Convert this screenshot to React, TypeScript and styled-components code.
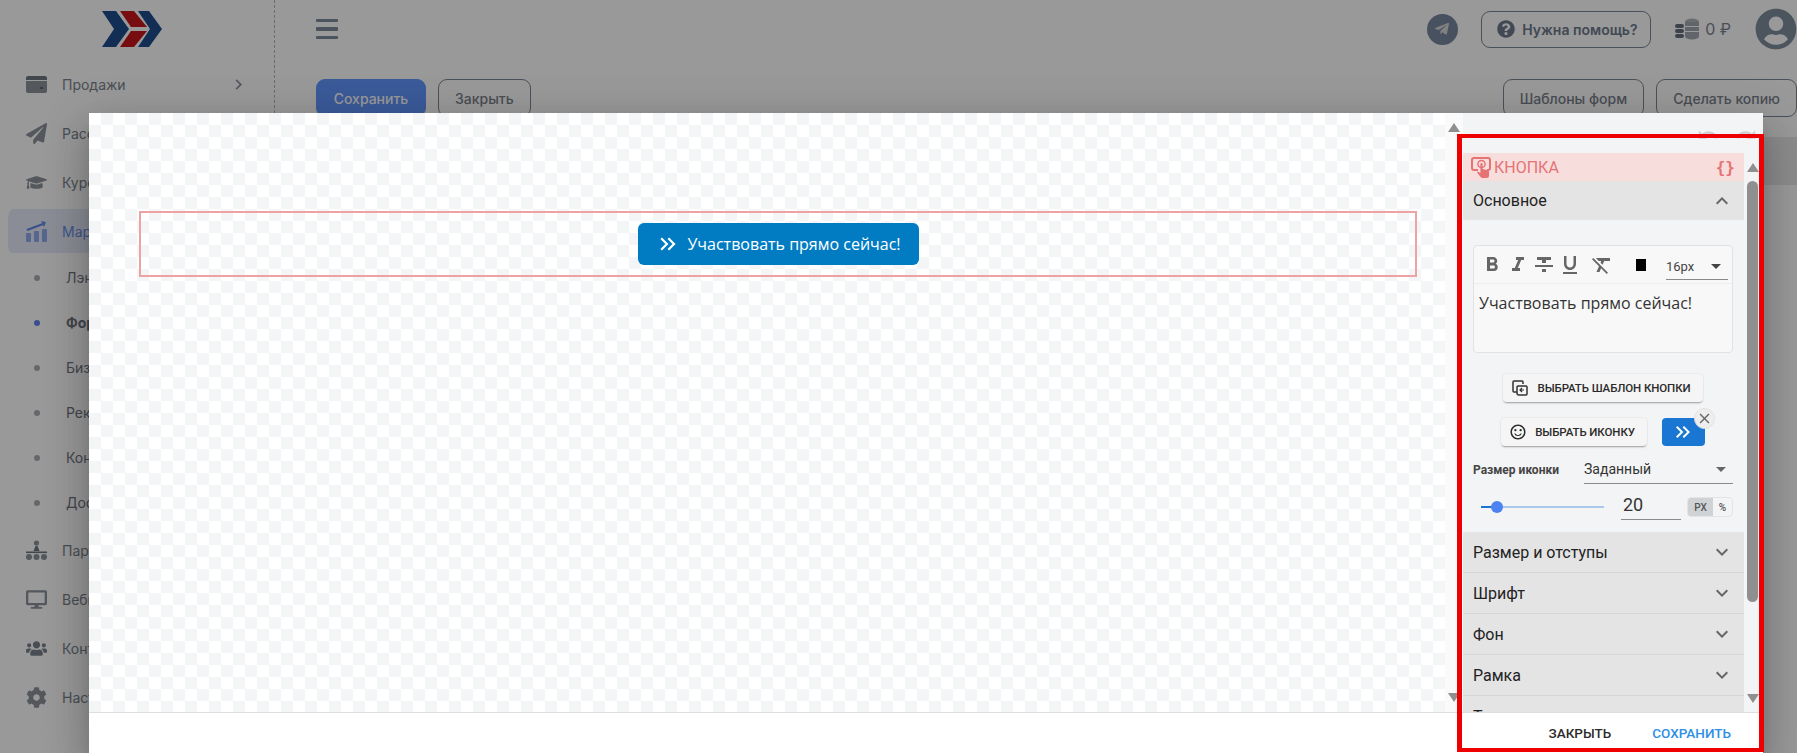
import { ReactNode } from 'react';
import styled, { createGlobalStyle } from 'styled-components';
import {
  FaPaperPlane, FaGraduationCap, FaDesktop, FaUsers, FaCog, FaTelegramPlane, FaQuestionCircle, FaUserCircle
} from 'react-icons/fa';
import {
  MdChevronRight, MdExpandMore, MdExpandLess, MdFormatBold, MdFormatItalic, MdFormatStrikethrough,
  MdFormatUnderlined, MdFormatClear, MdClose, MdKeyboardDoubleArrowRight, MdOutlineSentimentSatisfied,
  MdUndo, MdRedo, MdArrowDropDown
} from 'react-icons/md';

const GlobalStyle = createGlobalStyle`
  html, body {
    margin: 0;
    height: 100%;
    overflow: hidden;
    background: #fff;
    font-family: Inter, "Liberation Sans", sans-serif;
  }
  * { box-sizing: border-box; }
`;

const Screen = styled.div`
  position: relative;
  width: 1797px;
  height: 753px;
  overflow: hidden;
  display: flex;
`;

/* ---------- page behind the dialog ---------- */

const Sidebar = styled.aside`
  width: 275px;
  flex: none;
  padding-right: 8px;
  border-right: 1px dashed #b5b5b5;
`;

const LogoBox = styled.div`
  height: 60px;
  padding: 11px 0 0 102px;
  svg { display: block; }
`;

const NavRow = styled.div<{ $active?: boolean }>`
  height: 49px;
  margin-left: 8px;
  padding-left: 18px;
  display: flex;
  align-items: center;
  gap: 15px;
  font-size: 14px;
  border-radius: 10px;
  color: ${p => p.$active ? '#6a8fe8' : '#7b838d'};
  background: ${p => p.$active ? 'linear-gradient(#e6ebf8, #e6ebf8) 0 2px / 100% 44px no-repeat' : 'none'};
  svg { flex: none; width: 21px; height: 21px; }
`;

const NavChevron = styled.span`
  margin-left: auto;
  margin-right: 17px;
  display: flex;
  color: #8d95a0;
`;

const SubList = styled.div`
  margin: -1px 0 1px;
`;

const SubRow = styled.div<{ $active?: boolean }>`
  height: 45px;
  padding-left: 34px;
  display: flex;
  align-items: center;
  gap: 26px;
  font-size: 14px;
  font-weight: ${p => p.$active ? 700 : 400};
  color: #6e757f;
  &::before {
    content: '';
    width: 6px;
    height: 6px;
    border-radius: 50%;
    background: ${p => p.$active ? '#5f86e8' : '#a9adb3'};
  }
`;

const Main = styled.main`
  flex: 1;
  min-width: 0;
  padding-left: 41px;
`;

const TopBar = styled.header`
  height: 58px;
  display: flex;
  align-items: center;
`;

const Burger = styled.div`
  width: 22px;
  display: grid;
  gap: 5px;
  span { height: 3.5px; border-radius: 1px; background: #7e8a9c; }
`;

const TopRight = styled.div`
  margin-left: auto;
  display: flex;
  align-items: center;
  color: #6e7a8c;
`;

const TelegramDot = styled.span`
  width: 31px;
  height: 31px;
  border-radius: 50%;
  margin-right: 23px;
  padding-right: 2px;
  background: #7888a0;
  color: #d8d8d8;
  display: flex;
  align-items: center;
  justify-content: center;
  font-size: 16px;
`;

const HelpButton = styled.span`
  width: 170px;
  height: 37px;
  border: 1px solid #7d8794;
  border-radius: 9px;
  padding-left: 15px;
  display: flex;
  align-items: center;
  gap: 7px;
  font-size: 14px;
  font-weight: 600;
  color: #6e7a8c;
  svg { width: 18px; height: 18px; }
`;

const Balance = styled.span`
  margin: 0 24px 0 24px;
  display: flex;
  align-items: center;
  gap: 6px;
  font-size: 16px;
  color: #7c8592;
`;

const Avatar = styled.span`
  display: flex;
  color: #7f8c9c;
  font-size: 42px;
`;

const ActionBar = styled.div`
  margin-top: 21px;
  display: flex;
  gap: 12px;
`;

const PageButton = styled.span<{ $primary?: boolean }>`
  width: ${p => p.$primary ? '110px' : 'auto'};
  height: 38px;
  padding: 0 16px;
  display: flex;
  align-items: center;
  justify-content: center;
  font-size: 14px;
  font-weight: 500;
  border-radius: 9px;
  border: 1px solid ${p => p.$primary ? '#6296ff' : '#7d8794'};
  background: ${p => p.$primary ? '#6296ff' : 'transparent'};
  color: ${p => p.$primary ? '#ffffff' : '#7b838d'};
`;

const BarSpacer = styled.span`
  flex: 1;
`;

const Band = styled.div`
  margin-top: 20px;
  height: 48px;
  background: #e9e9e9;
`;

/* ---------- dialog ---------- */

const Dim = styled.div`
  position: absolute;
  inset: 0;
  background: rgba(0, 0, 0, 0.4);
`;

const Modal = styled.div`
  position: absolute;
  left: 89px;
  top: 113px;
  width: 1674px;
  height: 640px;
  background: #fff;
  border-radius: 4px 4px 0 0;
  display: flex;
  flex-direction: column;
  box-shadow: 0 11px 15px -7px rgba(0,0,0,.2), 0 24px 38px 3px rgba(0,0,0,.14), 0 9px 46px 8px rgba(0,0,0,.12);
`;

const ModalBody = styled.div`
  height: 600px;
  display: flex;
  border-bottom: 1px solid #ddd;
  overflow: hidden;
`;

const Canvas = styled.div`
  width: 1356px;
  padding: 98px 28px 0 50px;
  background: repeating-conic-gradient(#f4f5f6 0 25%, #fff 0 50%) 0 0 / 24px 24px;
`;

const SelectedBlock = styled.div`
  height: 66px;
  border: 2px solid #eca3a3;
  display: flex;
  align-items: center;
  justify-content: center;
`;

const CtaButton = styled.span`
  width: 281px;
  height: 42px;
  border-radius: 6px;
  background: #017cc3;
  color: #fff;
  font: 400 16px "Open Sans", sans-serif;
  display: flex;
  align-items: center;
  justify-content: center;
  gap: 6px;
  svg { width: 26px; height: 26px; }
`;

const ScrollTrack = styled.div`
  width: 18px;
  padding: 10px 0;
  display: flex;
  flex-direction: column;
  justify-content: space-between;
  align-items: center;
  background: #fafafa;
`;

const Arrow = styled.span<{ $down?: boolean }>`
  width: 0;
  height: 0;
  border-left: 6.5px solid transparent;
  border-right: 6.5px solid transparent;
  ${p => p.$down ? 'border-top: 9px solid #8f8f8f;' : 'border-bottom: 9px solid #8f8f8f;'}
`;

const Panel = styled.div`
  width: 300px;
  background: #f3f4f6;
  display: grid;
  grid-template-columns: 281px 19px;
  grid-template-rows: 40px 560px;
  font-family: Roboto, sans-serif;
  color: #222;
`;

const HistoryBar = styled.div`
  grid-column: 1 / 3;
  padding: 11px 6px 0 0;
  display: flex;
  justify-content: flex-end;
  gap: 16px;
  color: #cfcfcf;
  svg { width: 22px; height: 22px; }
`;

const PanelBody = styled.div`
  overflow: hidden;
`;

const PanelScroll = styled.div`
  padding: 10px 3px 10px 3px;
  display: flex;
  flex-direction: column;
  align-items: center;
  width: 17px;
`;

const PanelThumb = styled.div`
  width: 11px;
  height: 421px;
  margin-top: 9px;
  border-radius: 6px;
  background: #8f8f8f;
`;

const PanelSpacer = styled.div`
  flex: 1;
`;

const BlockTitle = styled.div`
  height: 28px;
  padding: 0 9px 0 8px;
  background: #f8dddd;
  color: #e57373;
  display: flex;
  align-items: center;
  gap: 2px;
  font-size: 16px;
`;

const Braces = styled.span`
  margin-left: auto;
  font: 700 16px "DejaVu Sans Mono", monospace;
`;

const SectionHead = styled.div<{ $open?: boolean }>`
  height: ${p => p.$open ? '39px' : '41px'};
  padding: 0 10px;
  background: #e4e4e4;
  border-bottom: ${p => p.$open ? 'none' : '1px solid #d6d6d6'};
  display: flex;
  align-items: center;
  justify-content: space-between;
  font-size: 16px;
  svg { width: 24px; height: 24px; color: #666; }
`;

const SectionBody = styled.div`
  height: 312px;
  padding: 25px 11px 0 10px;
`;

const Editor = styled.div`
  height: 108px;
  border: 1px solid #e2e2e2;
  border-radius: 4px;
  background: #f8f8f8;
`;

const EditorTools = styled.div`
  height: 38px;
  padding: 0 4px 0 6px;
  border-bottom: 1px solid #eeeeee;
  display: flex;
  align-items: center;
  color: #666;
  svg { width: 24px; height: 24px; flex: none; }
  svg + svg { margin-left: 2px; }
`;

const Swatch = styled.span`
  width: 10px;
  height: 12px;
  margin: 0 20px 0 22px;
  flex: none;
  background: #000;
`;

const FontSelect = styled.span`
  flex: 1;
  height: 28px;
  margin-top: 2px;
  padding-top: 2px;
  border-bottom: 1px solid #8a8a8a;
  display: flex;
  align-items: center;
  justify-content: space-between;
  font-size: 13px;
  color: #444;
  svg + svg { margin: 0; }
`;

const EditorText = styled.div`
  padding: 8px 5px;
  font: 400 16px "Open Sans", sans-serif;
  color: #333;
`;

const ButtonLine = styled.div<{ $gap?: number }>`
  display: flex;
  justify-content: center;
  gap: 15px;
  margin-top: ${p => p.$gap}px;
`;

const PickButton = styled.span`
  height: 28px;
  padding: 0 12px 0 8px;
  display: flex;
  align-items: center;
  gap: 8px;
  border-radius: 4px;
  background: #f5f5f5;
  font: 500 11.5px Roboto, sans-serif;
  letter-spacing: -0.1px;
  color: #2b2b2b;
  box-shadow: 0 2px 2px -1px rgba(0,0,0,.35), 0 0 2px rgba(0,0,0,.12);
  svg { width: 18px; height: 18px; }
`;

const IconPreview = styled.span`
  position: relative;
  width: 43px;
  height: 28px;
  border-radius: 4px;
  background: #1976d2;
  color: #fff;
  display: flex;
  align-items: center;
  justify-content: center;
  svg { width: 24px; height: 24px; }
`;

const RemoveIcon = styled.span`
  position: absolute;
  right: -10px;
  top: -10px;
  width: 21px;
  height: 21px;
  border-radius: 50%;
  background: #eeeeee;
  border: 1px solid #e2e2e2;
  color: #666;
  display: flex;
  align-items: center;
  justify-content: center;
  svg { width: 17px; height: 17px; }
`;

const SizeLine = styled.div`
  margin-top: 15px;
  display: flex;
`;

const SizeLabel = styled.span`
  width: 111px;
  padding-top: 2px;
  font-size: 12px;
  font-weight: 700;
  color: #444;
`;

const SizeSelect = styled.span`
  flex: 1;
  height: 23px;
  border-bottom: 1px solid #8a8a8a;
  display: flex;
  justify-content: space-between;
  font-size: 14px;
  color: #333;
  svg { width: 24px; height: 24px; margin-top: -4px; color: #666; }
`;

const SliderLine = styled.div`
  margin-top: 10px;
  padding-left: 8px;
  display: flex;
  align-items: center;
`;

const SliderTrack = styled.div`
  position: relative;
  width: 123px;
  height: 2px;
  background: #a9c8ec;
`;

const SliderFill = styled.div`
  height: 100%;
  background: #1976d2;
`;

const SliderThumb = styled.span`
  position: absolute;
  top: -5px;
  width: 12px;
  height: 12px;
  margin-left: -6px;
  border-radius: 50%;
  background: #4d82f3;
`;

const NumberInput = styled.span`
  width: 60px;
  height: 26px;
  margin-left: 17px;
  padding-left: 2px;
  border-bottom: 1px solid #8a8a8a;
  font-size: 18px;
  color: #333;
`;

const UnitSwitch = styled.div`
  margin-left: 6px;
  width: 46px;
  height: 20px;
  border: 1px solid #e4e4e4;
  border-radius: 4px;
  display: flex;
  overflow: hidden;
  font-size: 10px;
  font-weight: 500;
  color: #555;
`;

const Unit = styled.span<{ $on?: boolean }>`
  flex: ${p => p.$on ? '0 0 25px' : 1};
  display: flex;
  align-items: center;
  justify-content: center;
  background: ${p => p.$on ? '#d0d3d6' : 'transparent'};
`;

const ModalFooter = styled.div`
  height: 40px;
  padding: 12px 32px 0 0;
  display: flex;
  justify-content: flex-end;
  gap: 41px;
  font: 500 13.5px Roboto, sans-serif;
`;

const FooterAction = styled.span<{ $primary?: boolean }>`
  color: ${p => p.$primary ? '#2e8fe6' : '#2b2b2b'};
`;

const Highlight = styled.div`
  position: absolute;
  left: 1457px;
  top: 134px;
  width: 307px;
  height: 618px;
  border: solid #ee0000;
  border-width: 4px 5px;
  pointer-events: none;
`;

/* ---------- drawings ---------- */

function Logo(){
  return (
    <svg width="60" height="36" viewBox="0 0 60 36">
      <path d="M0 0h14l13 18-13 18H0l12-18z" fill="#1f4e8c"/>
      <path d="M18 0h14l13 16H29zM29 20h16L32 36H18z" fill="#c8161d"/>
      <path d="M36 0h11l13 18-13 18H36l12-18z" fill="#1f4e8c"/>
    </svg>
  );
}

function CardIcon(){
  return (
    <svg viewBox="0 0 21 21" fill="#8c939c">
      <path d="M2 2h17a2 2 0 0 1 2 2v2H0V4a2 2 0 0 1 2-2z" fill="#6f7781"/>
      <path d="M0 7h21v10a2 2 0 0 1-2 2H2a2 2 0 0 1-2-2z"/>
      <rect x="14" y="13" width="3" height="2" fill="#5f666f"/>
    </svg>
  );
}

function BarsIcon(){
  return (
    <svg viewBox="0 0 21 21" fill="#6a8fe8">
      <rect x="0" y="12" width="5" height="9" rx="1" opacity=".7"/>
      <rect x="8" y="10" width="5" height="11" rx="1" opacity=".7"/>
      <rect x="16" y="8" width="5" height="13" rx="1" opacity=".7"/>
      <path d="M1 9l8-3 8-3" stroke="#5f86e8" strokeWidth="2" fill="none"/>
      <path d="M15 0l5 1-2 5z"/>
    </svg>
  );
}

function TreeIcon(){
  return (
    <svg viewBox="0 0 21 21" fill="#8c939c">
      <circle cx="10.5" cy="3" r="2.6"/>
      <path d="M7.5 11l2-5h2l2 5z" fill="#6f7781"/>
      <rect x="0" y="11.5" width="21" height="1.6" fill="#6f7781"/>
      <circle cx="3" cy="17" r="3"/><circle cx="10.5" cy="17" r="3"/><circle cx="18" cy="17" r="3"/>
    </svg>
  );
}

function Coins(){
  return (
    <svg width="24" height="22" viewBox="0 0 24 22">
      <ellipse cx="17" cy="3.5" rx="7" ry="3" fill="#b0b5bc"/>
      <rect x="10" y="4" width="14" height="4" fill="#a2a8b0"/>
      <rect x="10" y="9" width="14" height="4" fill="#a2a8b0"/>
      <rect x="10" y="14" width="14" height="4" fill="#a2a8b0"/>
      <ellipse cx="17" cy="18.5" rx="7" ry="3" fill="#a2a8b0"/>
      <rect x="0" y="6" width="9" height="4" rx="2" fill="#66707e"/>
      <rect x="0" y="11" width="9" height="4" rx="2" fill="#66707e"/>
      <rect x="0" y="16" width="9" height="4" rx="2" fill="#66707e"/>
    </svg>
  );
}

function TouchIcon(){
  return (
    <svg width="21" height="21" viewBox="0 0 21 21">
      <path d="M7 13H3a2 2 0 0 1-2-2V3a2 2 0 0 1 2-2h14a2 2 0 0 1 2 2v8a2 2 0 0 1-2 2h-1" fill="none" stroke="#e57373" strokeWidth="2"/>
      <circle cx="10.5" cy="7" r="3.6" fill="none" stroke="#e57373" strokeWidth="1.5"/>
      <path d="M9.4 7a1.1 1.1 0 0 1 2.2 0v5l5 1.2c.8.2 1.4.9 1.4 1.7V19a2 2 0 0 1-2 2h-4.6a2 2 0 0 1-1.6-.8L6 15.5l1-1 2.4 1.5z" fill="#e57373"/>
    </svg>
  );
}

function TemplateIcon(){
  return (
    <svg viewBox="0 0 18 18" fill="none" stroke="#333" strokeWidth="1.5">
      <path d="M6 13H3a1 1 0 0 1-1-1V3a1 1 0 0 1 1-1h8a1 1 0 0 1 1 1v2"/>
      <path d="M6 8a1 1 0 0 1 1-1h8a1 1 0 0 1 1 1v7a1 1 0 0 1-1 1H8a2 2 0 0 1-2-2z"/>
      <path d="M13 11H9.5M11 9l-2 2 2 2" strokeWidth="1.2"/>
    </svg>
  );
}

/* ---------- data ---------- */

const topNav: Array<{ label: string, icon: ReactNode, active?: boolean, more?: boolean }> = [
  { label: 'Продажи', icon: <CardIcon/>, more: true },
  { label: 'Рассылки', icon: <FaPaperPlane color="#8c939c"/> },
  { label: 'Курсы', icon: <FaGraduationCap color="#8c939c"/> },
  { label: 'Маркетинг', icon: <BarsIcon/>, active: true },
];
const subNav = ['Лэндинги', 'Формы', 'Бизнес-процессы', 'Реклама', 'Конверсии', 'Доставка'];
const bottomNav: Array<{ label: string, icon: ReactNode }> = [
  { label: 'Партнёры', icon: <TreeIcon/> },
  { label: 'Вебинары', icon: <FaDesktop color="#8c939c"/> },
  { label: 'Контакты', icon: <FaUsers color="#7b838d"/> },
  { label: 'Настройки', icon: <FaCog color="#8c939c"/> },
];
const closedSections = ['Размер и отступы', 'Шрифт', 'Фон', 'Рамка', 'Тень'];

export default function App(){
  return (
    <Screen>
      <GlobalStyle/>
      <Sidebar>
        <LogoBox><Logo/></LogoBox>
        {topNav.map(item => (
          <NavRow key={item.label} $active={item.active}>
            {item.icon}
            {item.label}
            {item.more && <NavChevron><MdChevronRight/></NavChevron>}
          </NavRow>
        ))}
        <SubList>
          {subNav.map(label => <SubRow key={label} $active={label === 'Формы'}>{label}</SubRow>)}
        </SubList>
        {bottomNav.map(item => (
          <NavRow key={item.label}>{item.icon}{item.label}</NavRow>
        ))}
      </Sidebar>

      <Main>
        <TopBar>
          <Burger><span/><span/><span/></Burger>
          <TopRight>
            <TelegramDot><FaTelegramPlane/></TelegramDot>
            <HelpButton><FaQuestionCircle/>Нужна помощь?</HelpButton>
            <Balance><Coins/>0 ₽</Balance>
            <Avatar><FaUserCircle/></Avatar>
          </TopRight>
        </TopBar>
        <ActionBar>
          <PageButton $primary>Сохранить</PageButton>
          <PageButton>Закрыть</PageButton>
          <BarSpacer/>
          <PageButton>Шаблоны форм</PageButton>
          <PageButton>Сделать копию</PageButton>
        </ActionBar>
        <Band/>
      </Main>

      <Dim/>

      <Modal>
        <ModalBody>
          <Canvas>
            <SelectedBlock>
              <CtaButton><MdKeyboardDoubleArrowRight/>Участвовать прямо сейчас!</CtaButton>
            </SelectedBlock>
          </Canvas>
          <ScrollTrack><Arrow/><Arrow $down/></ScrollTrack>
          <Panel>
            <HistoryBar><MdUndo/><MdRedo/></HistoryBar>
            <PanelBody>
              <BlockTitle><TouchIcon/>КНОПКА<Braces>{'{}'}</Braces></BlockTitle>
              <SectionHead $open>Основное<MdExpandLess/></SectionHead>
              <SectionBody>
                <Editor>
                  <EditorTools>
                    <MdFormatBold/><MdFormatItalic/><MdFormatStrikethrough/><MdFormatUnderlined/>
                    <MdFormatClear style={{ marginLeft: 8 }}/>
                    <Swatch/>
                    <FontSelect>16px<MdArrowDropDown/></FontSelect>
                  </EditorTools>
                  <EditorText>Участвовать прямо сейчас!</EditorText>
                </Editor>
                <ButtonLine $gap={21}>
                  <PickButton><TemplateIcon/>ВЫБРАТЬ ШАБЛОН КНОПКИ</PickButton>
                </ButtonLine>
                <ButtonLine $gap={16}>
                  <PickButton><MdOutlineSentimentSatisfied/>ВЫБРАТЬ ИКОНКУ</PickButton>
                  <IconPreview>
                    <MdKeyboardDoubleArrowRight/>
                    <RemoveIcon><MdClose/></RemoveIcon>
                  </IconPreview>
                </ButtonLine>
                <SizeLine>
                  <SizeLabel>Размер иконки</SizeLabel>
                  <SizeSelect>Заданный<MdArrowDropDown/></SizeSelect>
                </SizeLine>
                <SliderLine>
                  <SliderTrack>
                    <SliderFill style={{ width: '13%' }}/>
                    <SliderThumb style={{ left: '13%' }}/>
                  </SliderTrack>
                  <NumberInput>20</NumberInput>
                  <UnitSwitch><Unit $on>PX</Unit><Unit>%</Unit></UnitSwitch>
                </SliderLine>
              </SectionBody>
              {closedSections.map(title => (
                <SectionHead key={title}>{title}<MdExpandMore/></SectionHead>
              ))}
            </PanelBody>
            <PanelScroll>
              <Arrow/>
              <PanelThumb/>
              <PanelSpacer/>
              <Arrow $down/>
            </PanelScroll>
          </Panel>
        </ModalBody>
        <ModalFooter>
          <FooterAction>ЗАКРЫТЬ</FooterAction>
          <FooterAction $primary>СОХРАНИТЬ</FooterAction>
        </ModalFooter>
      </Modal>

      <Highlight/>
    </Screen>
  );
}
